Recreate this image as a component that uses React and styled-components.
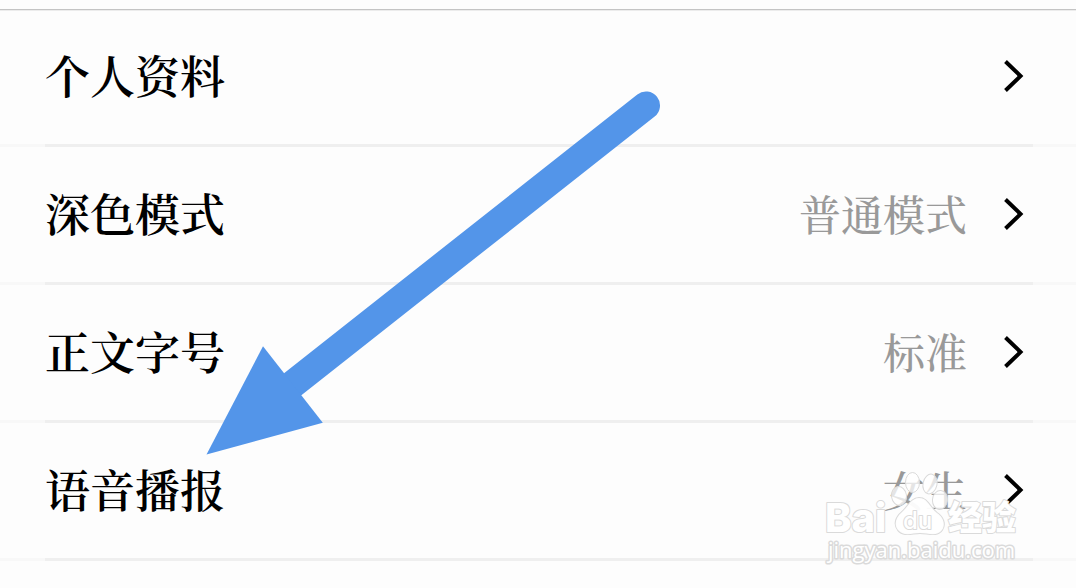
import React from "react";
import styled, { createGlobalStyle } from "styled-components";

const GlobalStyle = createGlobalStyle`
  * { box-sizing: border-box; }
  body {
    margin: 0;
    background: #fdfdfd;
    font-family: "Noto Serif CJK SC", "Source Han Serif SC", "Noto Sans CJK SC", serif;
  }
`;

const Page = styled.main`
  position: relative;
  overflow: hidden;
  min-height: 100vh;
  padding-top: 9px;
`;

const List = styled.ul`
  margin: 0;
  padding: 0;
  list-style: none;
  box-shadow: inset 0 1px 0 #c4c4c4, inset 0 2px 0 #ececec;
`;

const Item = styled.li`
  display: flex;
  flex-direction: column;
  height: 138px;
`;

const Row = styled.button`
  flex: 1;
  display: flex;
  align-items: center;
  gap: 36px;
  width: 100%;
  padding: 0 52px 2px 45px;
  border: 0;
  background: transparent;
  color: #000;
  font-family: inherit;
  text-align: left;
  cursor: pointer;
`;

const Label = styled.span`
  flex: 1;
  padding-bottom: 2px;
  font-size: 45px;
  line-height: 60px;
  font-weight: 600;
`;

const Value = styled.span`
  padding-bottom: 2px;
  font-size: 42px;
  line-height: 60px;
  font-weight: 500;
  color: #999;
`;

const Divider = styled.div`
  height: 3px;
  padding: 0 43px 0 45px;
  background: #f8f8f8;

  &::before {
    content: "";
    display: block;
    height: 100%;
    background: #efefef;
  }
`;

const ChevronIcon = styled.svg`
  display: block;
  flex: none;
  width: 21px;
  height: 34px;
`;

const Pointer = styled.svg`
  position: absolute;
  top: 0;
  left: 0;
  width: 680px;
  height: 480px;
  pointer-events: none;
`;

const Watermark = styled.svg`
  position: absolute;
  top: 464px;
  right: 50px;
  width: 208px;
  height: 108px;
  pointer-events: none;

  text {
    font-family: Inter, "Noto Sans CJK SC", sans-serif;
    font-weight: 800;
  }
  .url {
    font-family: "Open Sans", sans-serif;
    font-weight: 400;
  }
`;

const Chevron = () => (
  <ChevronIcon viewBox="0 0 21 34" aria-hidden="true">
    <path d="M2.5 2.5 17.5 17 2.5 31.5" fill="none" stroke="#000" strokeWidth="4" />
  </ChevronIcon>
);

const settings = [
  { label: "个人资料" },
  { label: "深色模式", value: "普通模式" },
  { label: "正文字号", value: "标准" },
  { label: "语音播报", value: "女生" },
];

export default function App() {
  return (
    <Page>
      <GlobalStyle />
      <List>
        {settings.map(({ label, value }) => (
          <Item key={label}>
            <Row type="button">
              <Label>{label}</Label>
              {value && <Value>{value}</Value>}
              <Chevron />
            </Row>
            <Divider />
          </Item>
        ))}
      </List>

      <Pointer viewBox="0 0 680 480" aria-hidden="true">
        <path d="M293 384 646 105.500" stroke="#5395e9" strokeWidth="28" strokeLinecap="round" />
        <path d="M206.500 454.500 263 346.300 322.800 422.800Z" fill="#5395e9" />
      </Pointer>

      <Watermark viewBox="818 464 208 108" aria-label="Baidu 经验">
        <g fill="#fff" stroke="#dadada" strokeWidth="2" strokeLinejoin="round" style={{ paintOrder: "stroke" }}>
          <g fillOpacity="0.75" strokeWidth="1" style={{ paintOrder: "normal" }}>
            <ellipse cx="899" cy="496" rx="7.500" ry="9.500" transform="rotate(-8 899 496)" />
            <ellipse cx="912.500" cy="482.500" rx="7" ry="10" />
            <ellipse cx="930" cy="484" rx="7" ry="10" transform="rotate(12 930 484)" />
            <ellipse cx="940" cy="500" rx="7.500" ry="9.500" transform="rotate(6 940 500)" />
          </g>
          <path fillOpacity="0.95" d="M919 498C911 498 908 507 902 512C895 518 894 525 898 530C904 537 912 533 920 533C928 533 937 537 942 530C946 524 943 517 937 513C929 507 928 498 919 498Z" />
          <text x="825" y="532" fontSize="40">Bai</text>
          <text x="903" y="529" fontSize="24" style={{ fontWeight: 500 }}>du</text>
          <text x="948" y="530" fontSize="34">经验</text>
          <text className="url" x="828" y="558" fontSize="22" strokeWidth="3">jingyan.baidu.com</text>
        </g>
      </Watermark>
    </Page>
  );
}
